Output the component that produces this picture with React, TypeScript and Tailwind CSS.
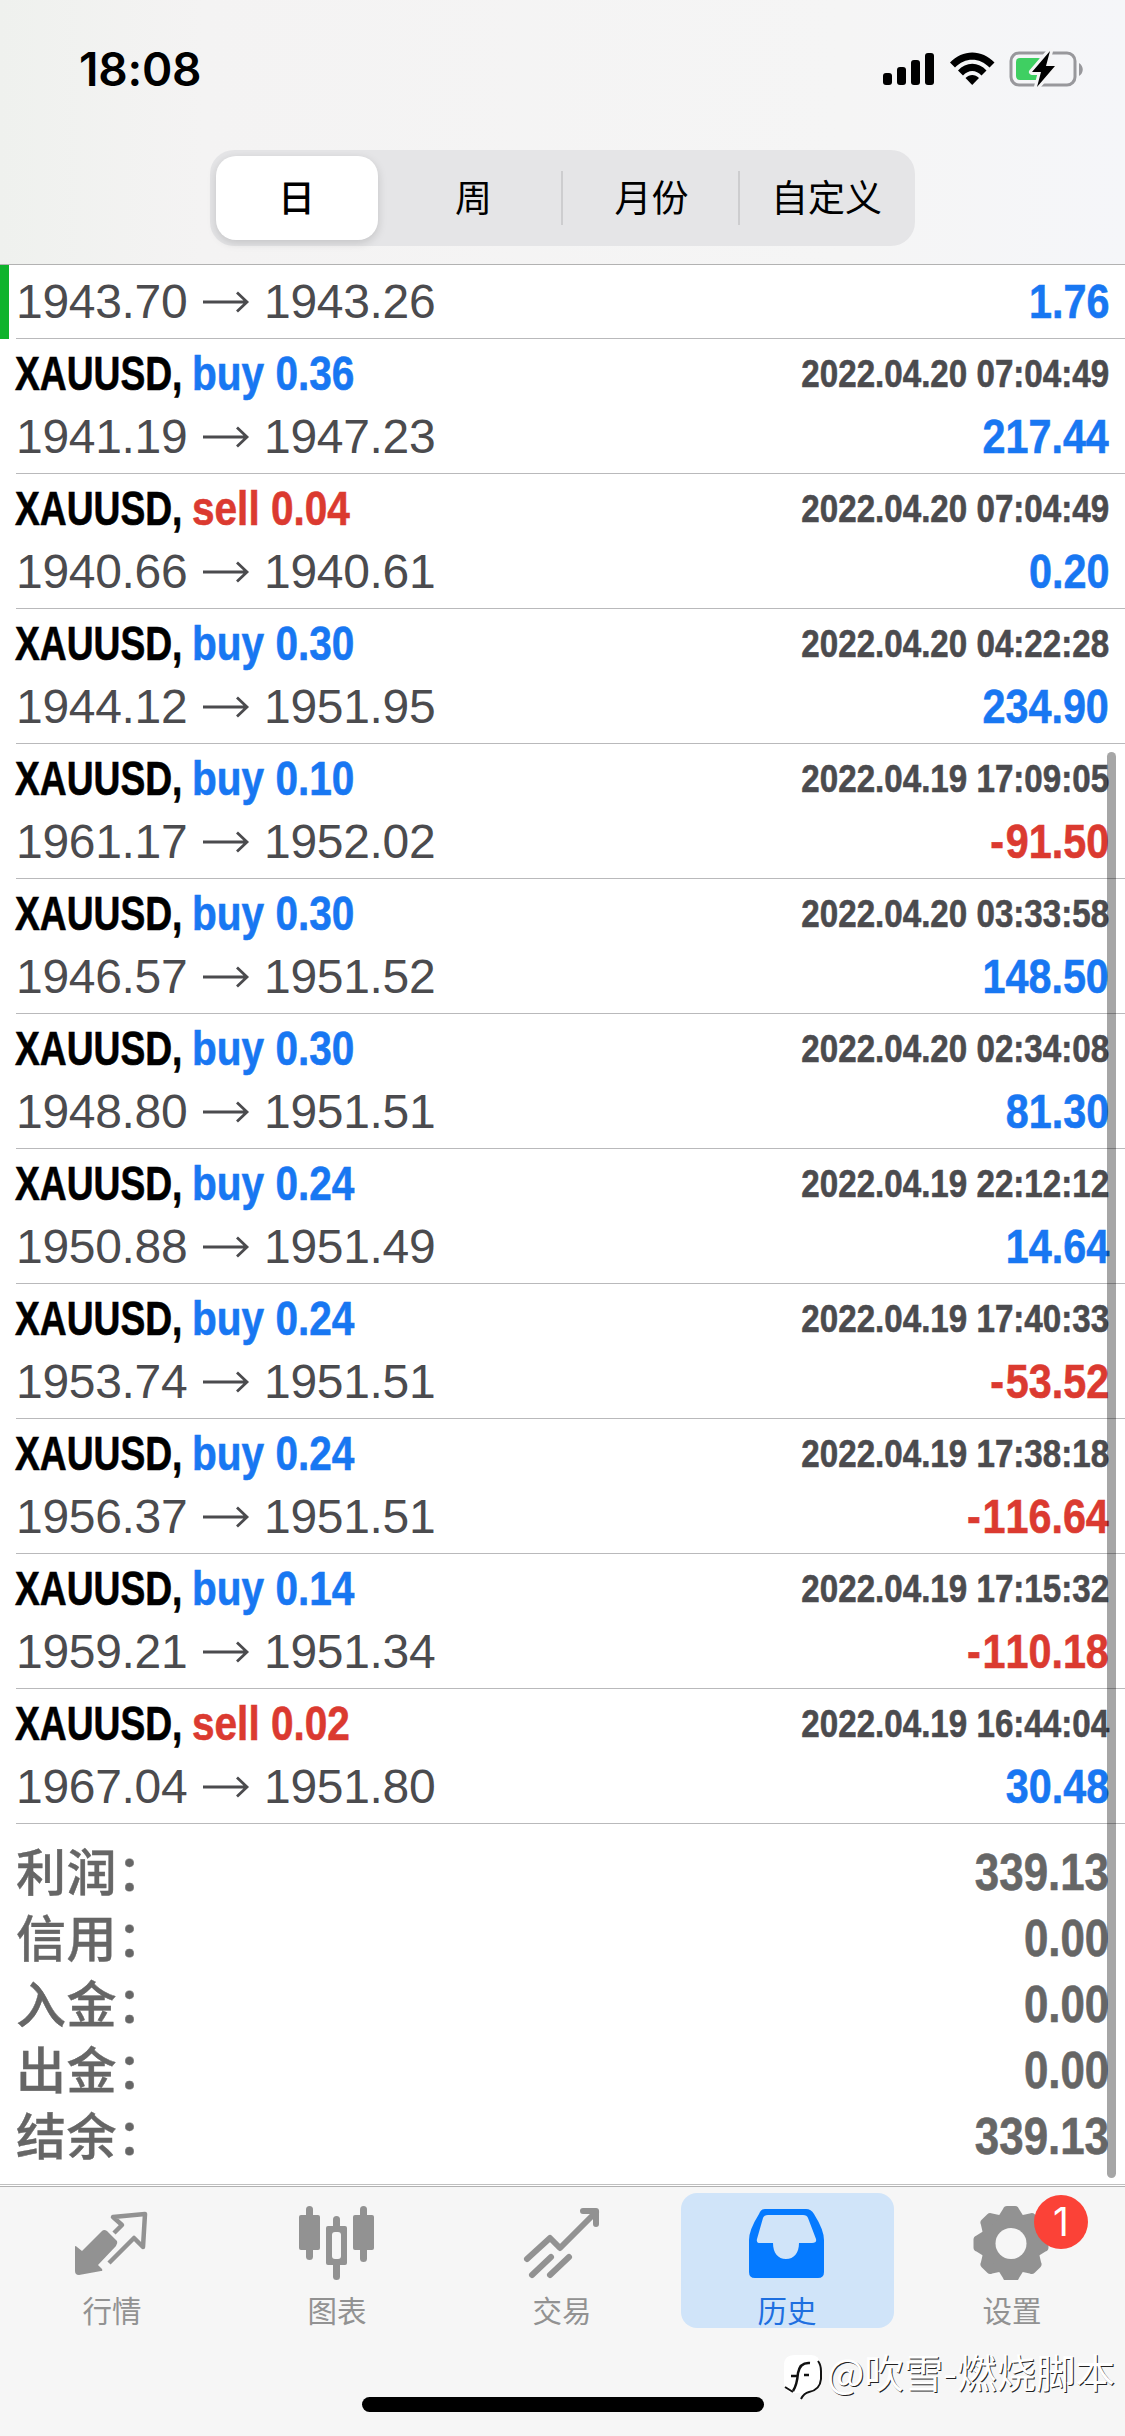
import React from "react";

const SANS = "font-['Liberation_Sans','Noto_Sans_CJK_SC',sans-serif]";
const CJK = "font-['Noto_Sans_CJK_SC',sans-serif]";

type Deal = { side: "buy" | "sell"; lots: string; date: string; open: string; close: string; profit: string };

const deals: Deal[] = [
  { side: "buy", lots: "0.36", date: "2022.04.20 07:04:49", open: "1941.19", close: "1947.23", profit: "217.44" },
  { side: "sell", lots: "0.04", date: "2022.04.20 07:04:49", open: "1940.66", close: "1940.61", profit: "0.20" },
  { side: "buy", lots: "0.30", date: "2022.04.20 04:22:28", open: "1944.12", close: "1951.95", profit: "234.90" },
  { side: "buy", lots: "0.10", date: "2022.04.19 17:09:05", open: "1961.17", close: "1952.02", profit: "-91.50" },
  { side: "buy", lots: "0.30", date: "2022.04.20 03:33:58", open: "1946.57", close: "1951.52", profit: "148.50" },
  { side: "buy", lots: "0.30", date: "2022.04.20 02:34:08", open: "1948.80", close: "1951.51", profit: "81.30" },
  { side: "buy", lots: "0.24", date: "2022.04.19 22:12:12", open: "1950.88", close: "1951.49", profit: "14.64" },
  { side: "buy", lots: "0.24", date: "2022.04.19 17:40:33", open: "1953.74", close: "1951.51", profit: "-53.52" },
  { side: "buy", lots: "0.24", date: "2022.04.19 17:38:18", open: "1956.37", close: "1951.51", profit: "-116.64" },
  { side: "buy", lots: "0.14", date: "2022.04.19 17:15:32", open: "1959.21", close: "1951.34", profit: "-110.18" },
  { side: "sell", lots: "0.02", date: "2022.04.19 16:44:04", open: "1967.04", close: "1951.80", profit: "30.48" },
];

const totals = [
  ["利润", "339.13"],
  ["信用", "0.00"],
  ["入金", "0.00"],
  ["出金", "0.00"],
  ["结余", "339.13"],
];

function StatusBar() {
  return (
    <div className="flex h-[132px] items-start justify-between pl-[79px] pr-[44px]">
      <div className="mt-[42px] font-['Inter',sans-serif] text-[46px] font-semibold leading-[54px] tracking-[-0.2px] text-black">18:08</div>
      <svg className="mt-[46px]" width="204" height="46" viewBox="876 46 204 46" overflow="visible">
        <rect x="882" y="73" width="9" height="12" rx="3" />
        <rect x="896" y="67" width="9" height="18" rx="3" />
        <rect x="910" y="60" width="9" height="25" rx="3" />
        <rect x="924" y="53" width="9" height="32" rx="3" />
        <path d="M949 62.500C961.500 49 981 49 993.500 62.500L988.500 67.500C978.500 57 964 57 954 67.500Z" />
        <path d="M957 70.500C965 61.500 977.500 61.500 985.500 70.500L980.500 75.500C975 69.500 967.500 69.500 962 75.500Z" />
        <path d="M964.500 78C968.500 74 974 74 978 78L971.200 85Z" />
        <rect x="1010" y="53" width="64" height="32" rx="8" fill="none" stroke="#98989c" strokeWidth="3" />
        <path d="M1078 63C1083 66 1083 73 1078 76Z" fill="#98989c" />
        <rect x="1015" y="58" width="26" height="22" rx="4" fill="#3fcf62" />
        <path d="M1049 51L1031 72H1040L1036 87L1054 66H1045Z" fill="#000" stroke="#f5f5f6" strokeWidth="6" paintOrder="stroke" strokeLinejoin="round" />
      </svg>
    </div>
  );
}

function Segments() {
  return (
    <div className={`ml-[210px] flex h-[96px] w-[705px] items-center rounded-[24px] bg-[#e5e5e7] p-[6px] text-[37px] leading-none text-black ${CJK}`}>
      <div className="flex h-[84px] w-[162px] items-center justify-center rounded-[20px] bg-white pb-1 pr-px font-medium shadow-[0_3px_10px_rgba(0,0,0,0.15)]">日</div>
      <div className="flex h-[54px] w-[185px] items-center justify-center border-r-2 border-[#cdcdcf] pb-1 pl-2">周</div>
      <div className="flex h-[54px] w-[177px] items-center justify-center border-r-2 border-[#cdcdcf] pb-1 pl-[2px]">月份</div>
      <div className="flex h-[54px] flex-1 items-center justify-center pb-1 pl-1">自定义</div>
    </div>
  );
}

function Prices({ open, close }: { open: string; close: string }) {
  return (
    <div className="flex h-[54px] items-center text-[48px] leading-[54px] tracking-[-0.3px] text-[#4b4b4e] [font-kerning:none]">
      <span className="w-[186px] whitespace-nowrap">{open}</span>
      <svg className="w-[48px]" height="24" viewBox="0 0 48 24" fill="none" stroke="#4b4b4e" strokeWidth="2.800">
        <path d="M1 12H45M35 2.500L45 12L35 21.500" />
      </svg>
      <span className="ml-[14px]">{close}</span>
    </div>
  );
}

function Profit({ value }: { value: string }) {
  const negative = value.startsWith("-");
  return (
    <span
      className={`origin-right scale-x-[0.86] text-[48px] font-bold leading-[54px] [-webkit-text-stroke:0.6px_currentColor] [font-kerning:none] ${negative ? "text-[#db3a30]" : "text-[#1877f2]"}`}
    >
      {negative ? <span className="mr-[2px]">-</span> : null}
      {value.replace("-", "")}
    </span>
  );
}

function DealRow({ deal }: { deal: Deal }) {
  return (
    <div className="ml-4 h-[135px] border-b border-[#b9b9bb] pr-4 pt-[8px]">
      <div className="flex h-[54px] items-center justify-between font-bold [-webkit-text-stroke:0.6px_currentColor] [font-kerning:none]">
        <div className="-ml-px flex items-center text-[48px] leading-[54px]">
          <span className="w-[177px] origin-left scale-x-[0.775] text-black">XAUUSD,</span>
          <span className={`origin-left scale-x-[0.845] whitespace-nowrap ${deal.side === "buy" ? "text-[#1877f2]" : "text-[#db3a30]"}`}>
            {deal.side} {deal.lots}
          </span>
        </div>
        <span className="origin-right scale-x-[0.85] text-[39px] leading-[54px] text-[#4b4b4e]">{deal.date}</span>
      </div>
      <div className="mt-[9px] flex justify-between">
        <Prices open={deal.open} close={deal.close} />
        <Profit value={deal.profit} />
      </div>
    </div>
  );
}

function TabItem({ label, active, children }: { label: string; active?: boolean; children: React.ReactNode }) {
  return (
    <div className="flex flex-1 justify-center pt-[6px]">
      <div className={`relative flex h-[135px] w-[213px] flex-col items-center rounded-[16px] pr-px pt-[11px] ${active ? "bg-[#d0e4f9] text-[#1e6fe0]" : "text-[#929292]"}`}>
        {children}
        <span className={`mt-[11px] text-[29.500px] leading-[36px] ${CJK}`}>{label}</span>
      </div>
    </div>
  );
}

function TabBar() {
  return (
    <div className="flex h-[211px] border-t border-[#b2b2b2] bg-[#f6f6f6]">
      <TabItem label="行情">
        <svg width="80" height="76" viewBox="72 2204 80 76" fill="currentColor">
          <path d="M75 2247Q75 2245 77 2247L82 2251L102 2231Q104 2229 107 2231L117 2241Q118 2243 116 2246L98 2265L102 2269Q103 2271 101 2271L79 2275Q75 2275 75 2271Z" />
          <path d="M114 2233L122 2225L113 2217L145 2214L143 2247L134 2238L109 2263" fill="none" stroke="currentColor" strokeWidth="4.500" strokeLinejoin="round" />
        </svg>
      </TabItem>
      <TabItem label="图表">
        <svg width="80" height="76" viewBox="297 2204 80 76" fill="currentColor">
          <rect x="299" y="2215" width="21" height="35" rx="2" />
          <rect x="306" y="2206" width="7" height="54" rx="3.500" />
          <rect x="353" y="2215" width="21" height="35" rx="2" />
          <rect x="360" y="2206" width="7" height="56" rx="3.500" />
          <rect x="333" y="2216" width="7" height="64" rx="3.500" />
          <rect x="326" y="2226" width="21" height="39" rx="2" />
          <rect x="332" y="2232" width="9" height="27" rx="3" fill="#f6f6f6" />
        </svg>
      </TabItem>
      <TabItem label="交易">
        <svg width="80" height="76" viewBox="522 2204 80 76" fill="none" stroke="currentColor" strokeWidth="6" strokeLinecap="round" strokeLinejoin="round">
          <path d="M527 2259L550 2238L560 2248L596 2212" />
          <path d="M583 2211H596V2224M551 2257L532 2275M569 2257L550 2275" />
        </svg>
      </TabItem>
      <TabItem label="历史" active>
        <svg width="80" height="76" viewBox="747 2204 80 76">
          <path fillRule="evenodd" fill="#057aff" d="M765 2209H806Q811 2209 814 2214Q824 2230 824 2240V2272Q824 2278 818 2278H755Q749 2278 749 2272V2240Q749 2230 759 2214Q761 2209 765 2209ZM768 2215Q764 2215 763 2218L757 2239Q756 2243 760 2243H773C773 2253 778 2259 786 2259C794 2259 799 2253 799 2243H812Q817 2243 816 2239L808 2218Q807 2215 803 2215Z" />
        </svg>
      </TabItem>
      <TabItem label="设置">
        <svg width="80" height="76" viewBox="972 2204 80 76">
          <g fill="#929292">
            <circle cx="1011" cy="2243.500" r="30" />
            {[0, 45, 90, 135, 180, 225, 270, 315].map((angle) => (
              <path key={angle} transform={`rotate(${angle} 1011 2243.500)`} d="M998 2217L1003 2209Q1004 2206 1007 2206H1015Q1018 2206 1019 2209L1024 2217Z" />
            ))}
          </g>
          <circle cx="1011" cy="2243.500" r="15.500" fill="#f6f6f6" />
        </svg>
        <div className="absolute left-[128px] top-[2px] flex h-[54px] w-[54px] items-center justify-center rounded-full bg-[#fb4237] font-['Inter',sans-serif] text-[39px] text-white">1</div>
      </TabItem>
    </div>
  );
}

export default function App() {
  return (
    <div className={`relative flex h-[2436px] w-[1125px] flex-col overflow-hidden bg-white ${SANS}`}>
      <header className="h-[265px] shrink-0 border-b border-[#b2b2b2] bg-[linear-gradient(90deg,#eff1ee_0%,#f4f3f3_18%,#f5f5f5_75%,#f5f6f9_100%)]">
        <StatusBar />
        <div className="pt-[18px]">
          <Segments />
        </div>
      </header>
      <div className="flex h-[74px] shrink-0 border-l-[9px] border-[#0fb32c]">
        <div className="ml-[7px] flex flex-1 justify-between border-b border-[#b9b9bb] pr-4 pt-[10px]">
          <Prices open="1943.70" close="1943.26" />
          <Profit value="1.76" />
        </div>
      </div>
      {deals.map((deal) => (
        <DealRow key={deal.date + deal.open} deal={deal} />
      ))}
      <div className="h-[360px] shrink-0 pl-4 pr-4 pt-[16px]">
        {totals.map(([label, amount]) => (
          <div key={label} className="flex h-[66px] items-start justify-between text-[#666]">
            <span className={`-mt-[4px] text-[50px] font-medium leading-[66px] tracking-[0.500px] [-webkit-text-stroke:0.4px_currentColor] ${CJK}`}>{label}：</span>
            <span className="origin-right scale-x-[0.86] text-[51px] font-bold leading-[66px] [-webkit-text-stroke:0.6px_currentColor] [font-kerning:none]">{amount}</span>
          </div>
        ))}
      </div>
      <div className="h-[2px] shrink-0 border-t border-[#c0c0c0]" />
      <TabBar />
      <div className="flex flex-1 justify-center bg-[#f6f6f6]">
        <div className="h-[15px] w-[402px] rounded-full bg-black" />
      </div>
      <div className="absolute left-[1107px] top-[752px] h-[1426px] w-[9px] rounded-full bg-black/35" />
      <div className={`absolute left-[783px] top-[2341px] flex items-center whitespace-nowrap text-[39.500px] leading-[48px] text-white [text-shadow:1px_1px_0_#222] ${CJK}`}>
        <svg className="mr-[4px] mt-[12px]" width="40" height="48" viewBox="0 0 40 48">
          <path d="M12 2H28Q37 2 37 12V28Q37 37 26 39L18 46L17 40H10Q1 39 1 30V12Q1 2 12 2Z" fill="#fff" />
          <path d="M35 8Q38 12 38 18V26Q37 37 26 39Q21 40 18 46M2 34L10 39" fill="none" stroke="#111" strokeWidth="2" />
          <path d="M27 10Q17 9 15 20Q14 32 10 38M8 23H15M21 22H26" fill="none" stroke="#111" strokeWidth="2.500" />
        </svg>
        <span>@吹雪-燃烧脚本</span>
      </div>
    </div>
  );
}
